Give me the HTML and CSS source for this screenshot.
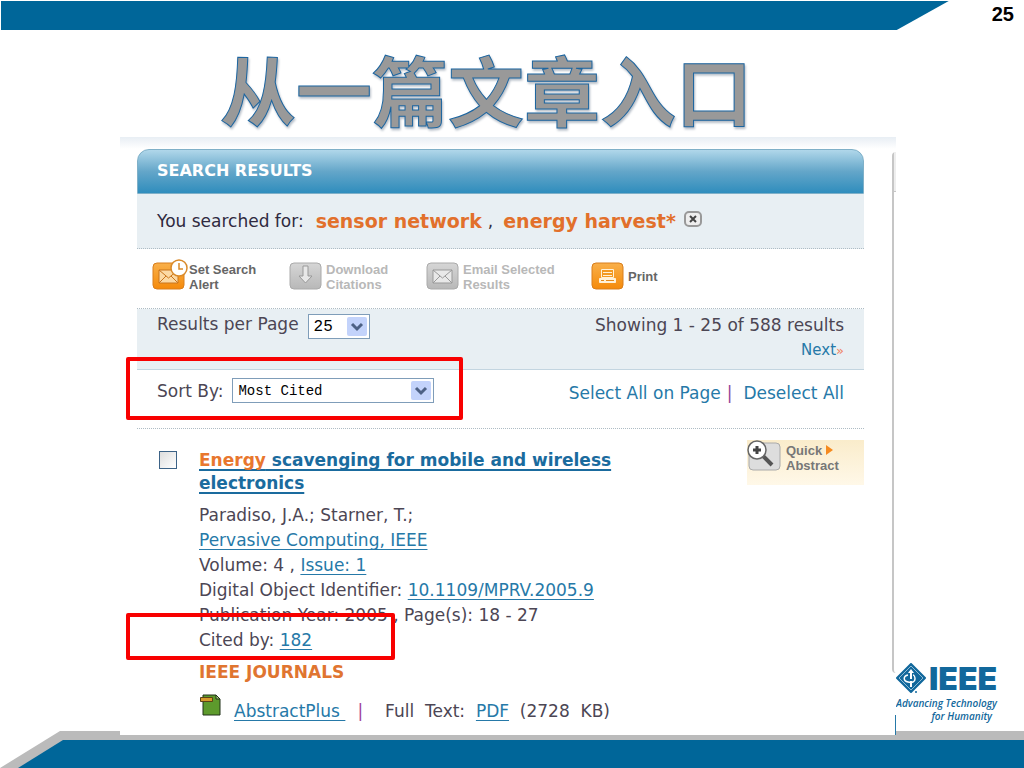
FILE: index.html
```html
<!DOCTYPE html>
<html lang="zh-CN">
<head>
    <meta charset="UTF-8">
    <title>从一篇文章入口</title>
    <link rel="stylesheet" href="styles.css">
</head>
<body>
<div class="slide">
    <header class="top">
        <div class="top-bar"></div>
        <span class="page-no">25</span>
    </header>
    <h1 class="title">从一篇文章入口</h1>

    <div class="content">
        <div class="shot">
            <main class="results">
                <h2 class="results-head">SEARCH RESULTS</h2>
                <div class="searched">
                    <span>You searched for:</span>
                    <b class="first">sensor network</b>
                    <span class="comma">,</span>
                    <b>energy harvest*</b>
                    <button class="clear" aria-label="Clear search">
                        <svg width="8" height="8" viewBox="0 0 8 8"><path d="M1 1l6 6M7 1l-6 6" stroke="#444" stroke-width="2"/></svg>
                    </button>
                </div>

                <div class="tools">
                    <button class="tool">
                        <svg class="tool-icon" width="36" height="32" viewBox="0 0 36 32">
                            <defs>
                                <linearGradient id="orange" x2="0" y2="1"><stop offset="0" stop-color="#f9b04a"/><stop offset="1" stop-color="#f58a0a"/></linearGradient>
                                <linearGradient id="grey" x2="0" y2="1"><stop offset="0" stop-color="#d6d6d6"/><stop offset="1" stop-color="#b8b8b8"/></linearGradient>
                            </defs>
                            <rect x="1" y="4" width="31" height="26" rx="4" fill="url(#orange)" stroke="#d97e1c"/>
                            <path d="M7 11h19v13H7z" fill="#fbd9a5" stroke="#c9741c"/>
                            <path d="M7 11l9.500 8L26 11M7 24l7-7M26 24l-7-7" fill="none" stroke="#c9741c"/>
                            <circle cx="27" cy="9" r="8" fill="#fff" stroke="#d98a2a" stroke-width="1.500"/>
                            <path d="M27 4v6h4" fill="none" stroke="#d98a2a" stroke-width="1.500"/>
                        </svg>
                        <span>Set Search<br>Alert</span>
                    </button>
                    <button class="tool" disabled>
                        <svg class="tool-icon" width="36" height="32" viewBox="0 0 36 32">
                            <rect x="1" y="4" width="31" height="26" rx="4" fill="url(#grey)" stroke="#aaa"/>
                            <path d="M14 7h5v10h4l-6.500 7-6.500-7h4z" fill="#e8e8e8" stroke="#999"/>
                        </svg>
                        <span>Download<br>Citations</span>
                    </button>
                    <button class="tool" disabled>
                        <svg class="tool-icon" width="36" height="32" viewBox="0 0 36 32">
                            <rect x="1" y="4" width="31" height="26" rx="4" fill="url(#grey)" stroke="#aaa"/>
                            <path d="M7 11h19v13H7z" fill="#e8e8e8" stroke="#999"/>
                            <path d="M7 11l9.500 8L26 11M7 24l7-7M26 24l-7-7" fill="none" stroke="#999"/>
                        </svg>
                        <span>Email Selected<br>Results</span>
                    </button>
                    <button class="tool">
                        <svg class="tool-icon" width="36" height="32" viewBox="0 0 36 32">
                            <rect x="1" y="4" width="31" height="26" rx="4" fill="url(#orange)" stroke="#d97e1c"/>
                            <path d="M10.500 10.500h12v8h-12z" fill="#f39a22" stroke="#fff1d8"/>
                            <path d="M12 13.500h9M12 16.500h9" stroke="#fff1d8"/>
                            <path d="M8.500 19.500h16v4h-16z" fill="#fff1d8" stroke="#fff1d8"/>
                            <path d="M10 21.500h3M15 21.500h8" stroke="#e58a1c"/>
                        </svg>
                        <span>Print</span>
                    </button>
                </div>

                <div class="pager">
                    <div class="field">
                        <label for="per-page">Results per Page</label>
                        <select id="per-page" class="select small"><option>25</option></select>
                    </div>
                    <div class="showing">
                        Showing 1 - 25 of 588 results
                        <a class="next" href="#">Next<span>»</span></a>
                    </div>
                </div>

                <div class="sort">
                    <div class="field">
                        <label for="sort-by">Sort By:</label>
                        <select id="sort-by" class="select wide"><option>Most Cited</option></select>
                    </div>
                    <div class="picks">
                        <a href="#">Select All on Page</a><span>|</span><a href="#">Deselect All</a>
                    </div>
                    <div class="mark mark-sort"></div>
                </div>

                <article class="paper">
                    <input class="check" type="checkbox" aria-label="Select article">
                    <div class="details">
                        <h3><a href="#"><em>Energy</em> scavenging for mobile and wireless electronics</a></h3>
                        <p>Paradiso, J.A.; Starner, T.;</p>
                        <p><a href="#">Pervasive Computing, IEEE</a></p>
                        <p>Volume: 4 , <a href="#">Issue: 1</a></p>
                        <p>Digital Object Identifier: <a href="#">10.1109/MPRV.2005.9</a></p>
                        <p>Publication Year: 2005 , Page(s): 18 - 27</p>
                        <div class="cited">
                            <p>Cited by: <a href="#">182</a></p>
                            <div class="mark mark-cited"></div>
                        </div>
                        <p class="journal">IEEE JOURNALS</p>
                        <div class="links">
                            <svg width="22" height="24" viewBox="0 0 22 24">
                                <path d="M4 2h13l4 4v16H4z" fill="#5d9a2c" stroke="#22331a"/>
                                <path d="M17 2v4h4z" fill="#a8cf7a" stroke="#22331a"/>
                                <path d="M1.500 4.500h12v4h-12z" fill="#d69a2b" stroke="#5a4316"/>
                            </svg>
                            <a href="#">AbstractPlus&nbsp;</a>
                            <span class="bar">|</span>
                            <span>Full&nbsp; Text:&nbsp; <a href="#">PDF</a>&nbsp; (2728&nbsp; KB)</span>
                        </div>
                    </div>
                    <button class="quick">
                        <svg width="36" height="32" viewBox="0 0 36 32">
                            <rect x="2" y="3" width="31" height="27" rx="4" fill="#ddd" stroke="#aaa"/>
                            <path d="M16 16l9 9" stroke="#555" stroke-width="4"/>
                            <circle cx="10" cy="10" r="9" fill="#fff" stroke="#666" stroke-width="1.500"/>
                            <path d="M10 6v8M6 10h8" stroke="#444" stroke-width="3"/>
                        </svg>
                        <span>Quick <i></i><br>Abstract</span>
                    </button>
                </article>
            </main>
            <div class="side">
                <div class="side-panel">
                    <div class="side-head"></div>
                </div>
                <div class="side-foot"></div>
            </div>
        </div>

        <aside class="brand">
            <div class="brand-name">
                <svg width="32" height="32" viewBox="0 0 32 32">
                    <path d="M15 1l14 14-14 14L1 15z" fill="#12689c" stroke="#12689c" stroke-width="2" stroke-linejoin="round"/>
                    <path d="M15 3l12 12-12 12L3 15z" fill="none" stroke="#8fbad4"/>
                    <path d="M15 6l-3 4h2v6h2v-6h2zM14 18h2v6h-2z" fill="#fff"/>
                    <path d="M12 12c-5 1-5 6 0 7 4 1 7 0 7-3 0-2-1-4-2-4" fill="none" stroke="#fff" stroke-width="1.500"/>
                    <circle cx="20" cy="29" r="1" fill="#12689c"/>
                </svg>
                <strong>IEEE</strong>
            </div>
            <p>Advancing Technology<span>for Humanity</span></p>
        </aside>
    </div>

    <footer class="bottom">
        <div class="bottom-bar"></div>
    </footer>
</div>
</body>
</html>
```
FILE: styles.css
```css
*{
    margin: 0;
    padding: 0;
    box-sizing: border-box;
}
body{
    background: #fff;
    color: #4c4654;
    font-family: "DejaVu Sans", Verdana, sans-serif;
    font-size: 17px;
}
a{
    color: #2679a8;
}
button{
    border: 0;
    background: none;
    cursor: pointer;
}
.slide{
    min-height: 100vh;
    display: flex;
    flex-direction: column;
}
.top{
    display: flex;
    justify-content: space-between;
    padding: 1px 10px 0 1px;
}
.top-bar{
    flex: 1;
    height: 29px;
    margin-right: 43px;
    background: #006699;
    clip-path: polygon(0 0, 100% 0, calc(100% - 52px) 100%, 0 100%);
}
.page-no{
    color: #000;
    font: bold 20px/26px "Liberation Sans", Arial, sans-serif;
}
.title{
    padding: 10px 52px 0 0;
    color: #999;
    font: bold 76px/97px "Noto Sans CJK SC", sans-serif;
    text-align: center;
    -webkit-text-stroke: 1px #1c65a0;
    filter: drop-shadow(1px 2px 1px #b4bcc6);
}

/* screenshot area and logo */
.content{
    flex: 1;
    display: grid;
    grid-template-columns: 1fr 128px;
    padding-left: 120px;
}
.shot{
    position: relative;
    z-index: 1;
    display: flex;
    gap: 28px;
    margin-bottom: -4px;
    padding: 12px 0 0 17px;
    background: linear-gradient(#e8eef4, #fff 12px);
}
.results{
    flex: 1;
}
.results-head{
    height: 45px;
    padding-left: 19px;
    border: 1px solid #7fb0c8;
    border-radius: 12px 12px 0 0;
    background: linear-gradient(#b0d7ea, #64a6c9 50%, #2f8dbd);
    color: #fff;
    font-size: 16px;
    line-height: 42px;
}
.searched{
    display: flex;
    align-items: center;
    height: 55px;
    padding-left: 20px;
    border-bottom: 1px dotted #aebcc4;
    background: #e8eff3;
    color: #2f2a40;
}
.searched b{
    margin-left: 6px;
    color: #e2702b;
    font-size: 19px;
}
.searched .first{
    margin-left: 12px;
}
.comma{
    margin: 0 4px 0 6px;
}
.clear{
    display: flex;
    align-items: center;
    justify-content: center;
    width: 18px;
    height: 16px;
    margin: 0 0 4px 8px;
    border: 2px solid #999;
    border-radius: 5px;
    background: #eee;
}
.tools{
    display: grid;
    grid-template-columns: 137px 137px 165px 1fr;
    height: 60px;
    padding: 10px 0 0 15px;
    border-bottom: 1px dotted #aebcc4;
}
.tool{
    display: flex;
    align-items: flex-start;
    gap: 1px;
    color: #666;
    font: bold 13px/15px "Liberation Sans", Arial, sans-serif;
    text-align: left;
}
.tool span{
    padding-top: 3px;
}
.tool:last-child span{
    padding-top: 10px;
}
.tool:disabled{
    color: #b8b8b8;
    cursor: default;
}
.tool-icon{
    flex: none;
}
.pager{
    display: flex;
    justify-content: space-between;
    height: 61px;
    padding: 4px 20px 0;
    border-bottom: 1px solid #c3d5e0;
    background: #e8eff3;
}
.field{
    display: flex;
    align-items: flex-start;
    gap: 9px;
    line-height: 22px;
}
.select{
    height: 25px;
    padding-left: 5px;
    border: 1px solid #7f9db9;
    border-radius: 0;
    appearance: none;
    background: #fff url("data:image/svg+xml,%3Csvg xmlns='http://www.w3.org/2000/svg' width='20' height='19'%3E%3Crect width='20' height='19' rx='2' fill='%23c3d3fb'/%3E%3Cpath d='M5 7l5 5 5-5' fill='none' stroke='%234d6185' stroke-width='3'/%3E%3C/svg%3E") no-repeat right 2px center;
    color: #000;
    font: 14px "Liberation Mono", "Courier New", monospace;
}
.pager .select{
    margin-top: 1px;
    font-size: 16px;
}
.small{
    width: 62px;
}
.wide{
    width: 202px;
}
.showing{
    line-height: 25px;
    text-align: right;
}
.next{
    display: block;
    font-size: 15px;
    line-height: 24px;
    text-decoration: none;
}
.next span{
    color: #f08060;
    font-size: 13px;
}
.sort{
    position: relative;
    display: flex;
    justify-content: space-between;
    height: 59px;
    padding: 8px 20px 0;
    border-bottom: 1px dotted #aebcc4;
}
.sort label{
    padding-top: 2px;
}
.picks{
    display: flex;
    line-height: 30px;
}
.picks a{
    text-decoration: none;
}
.picks span{
    margin: 0 11px 0 6px;
    color: #93469a;
}

/* red call-out boxes drawn over the results */
.mark{
    position: absolute;
    border: 4px solid #f80000;
    border-radius: 2px;
    pointer-events: none;
}
.mark-sort{
    left: -11px;
    top: -13px;
    width: 337px;
    height: 63px;
}
.mark-cited{
    left: -73px;
    top: -15px;
    width: 269px;
    height: 47px;
}

.paper{
    display: flex;
    align-items: flex-start;
    padding: 11px 0 4px 22px;
}
.check{
    width: 18px;
    height: 18px;
    margin: 11px 22px 0 0;
    border: 1px solid #3c6286;
    appearance: none;
    background: linear-gradient(135deg, #ddd, #fff);
}
.details{
    flex: 1;
    line-height: 25px;
}
.details a{
    text-decoration-thickness: 1px;
    text-underline-offset: 3px;
    text-decoration-skip-ink: none;
}
.details h3{
    max-width: 450px;
    margin: 9px 0 8px;
    font-size: 17px;
    line-height: 23px;
}
.details h3 a{
    color: #1a6b9e;
    text-decoration-thickness: 2px;
}
.details em{
    color: #e8772e;
    font-style: normal;
}
.cited{
    position: relative;
}
.details .journal{
    margin-top: 7px;
    color: #e07530;
    font-size: 17px;
    font-weight: bold;
}
.links{
    display: flex;
    align-items: center;
    margin-top: 8px;
    line-height: 34px;
}
.links svg{
    margin: 0 13px 12px 0;
}
.bar{
    margin: 0 22px 0 12px;
    color: #a0409a;
}
.quick{
    display: flex;
    width: 117px;
    height: 45px;
    background: linear-gradient(#faeccb, #fff8e8);
    color: #777;
    font: bold 13px/15px "Liberation Sans", Arial, sans-serif;
    text-align: left;
    gap: 3px;
}
.quick span{
    padding-top: 3px;
}
.quick i{
    display: inline-block;
    border: 5px solid transparent;
    border-left: 7px solid #f68a1e;
    border-right: 0;
}
.side{
    flex: none;
    display: flex;
    flex-direction: column;
    width: 4px;
    padding-top: 3px;
}
.side-panel{
    flex: 1;
    margin-bottom: 42px;
    border-left: 2px solid #c6c6c6;
    border-radius: 4px 0 0 4px;
}
.side-head{
    height: 40px;
    border-bottom: 1px solid #c6c6c6;
    background: #eee;
}
.side-foot{
    height: 20px;
    border-right: 1px solid #2679a8;
}
.brand{
    align-self: end;
    padding: 0 24px 8px 0;
    color: #12689c;
}
.brand-name{
    display: flex;
    align-items: center;
    margin-bottom: 2px;
}
.brand-name strong{
    padding-left: 1px;
    font: 900 32px/32px Inter, sans-serif;
}
.brand p{
    font: italic 600 10px/13px "Open Sans", sans-serif;
}
.brand p span{
    display: block;
    padding-right: 8px;
    text-align: right;
}
.bottom{
    height: 37px;
    padding-top: 9px;
    background: #bbb;
    clip-path: polygon(60px 0, 100% 0, 100% 100%, 0 100%);
}
.bottom-bar{
    height: 28px;
    background: #006699;
    clip-path: polygon(63px 0, 100% 0, 100% 100%, 18px 100%);
}
```
